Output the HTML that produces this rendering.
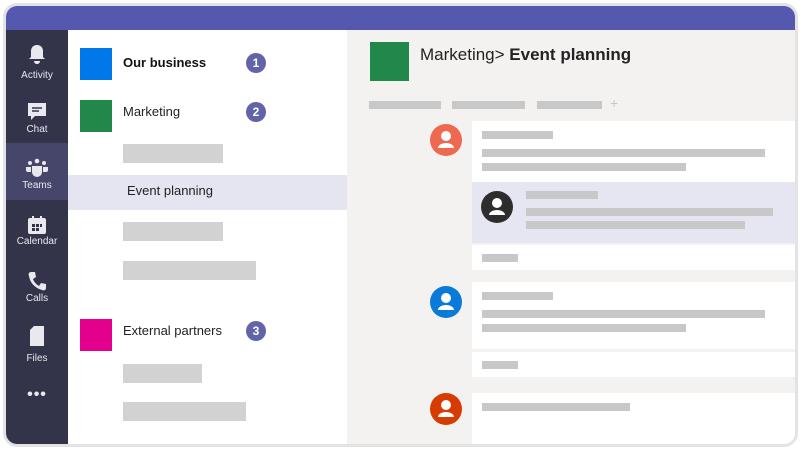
<!DOCTYPE html>
<html><head><meta charset="utf-8"><style>
*{margin:0;padding:0;box-sizing:border-box}
body{width:801px;height:449px;background:#fff;position:relative;overflow:hidden;font-family:"Liberation Sans",sans-serif}
.a{position:absolute}
.frame{left:3px;top:3px;width:795px;height:444px;border:3px solid #e3e3e3;border-radius:14px;overflow:hidden;background:#fff}
.bar{background:#c8c8c8}
.lbar{background:#d2d2d2}
.side{color:#e8e8ee;font-size:10px;text-align:center;width:62px;left:0}
.badge{width:20px;height:20px;border-radius:50%;background:#6264a7;color:#fff;font-size:12px;font-weight:bold;text-align:center;line-height:20px}
</style></head><body>
<div class="a frame">
 <div class="a" style="left:0;top:0;width:789px;height:24px;background:#5558af"></div>
 <div class="a" style="left:0;top:24px;width:62px;height:420px;background:#33344a"></div>
 <div class="a" style="left:0;top:137px;width:62px;height:57px;background:#45466a"></div>
 <svg class="a" style="left:20px;top:37px" width="22" height="22" viewBox="0 0 22 22"><path d="M11 2c-4 0-6 3-6 6v6l-2 2h16l-2-2V8c0-3-2-6-6-6z M8 18h6c0 2-1.5 3-3 3s-3-1-3-3z" fill="#e8e8ee"/></svg>
 <div class="a side" style="top:64px">Activity</div>
 <svg class="a" style="left:20px;top:95px" width="22" height="22" viewBox="0 0 22 22"><path d="M2 2h18v13H9l-4 4v-4H2z" fill="#e8e8ee"/><path d="M6 7h10M6 10h7" stroke="#33344a" stroke-width="1.5"/></svg>
 <div class="a side" style="top:118px">Chat</div>
 <svg class="a" style="left:19px;top:152px" width="24" height="20" viewBox="0 0 24 20"><circle cx="12" cy="3" r="2.3" fill="#e8e8ee"/><circle cx="5" cy="5" r="2" fill="#e8e8ee"/><circle cx="19" cy="5" r="2" fill="#e8e8ee"/><path d="M7 8h10v6a5 5 0 0 1-10 0z" fill="#e8e8ee"/><path d="M1 9h5v5H3a2 2 0 0 1-2-2zM18 9h5v3a2 2 0 0 1-2 2h-3z" fill="#e8e8ee"/></svg>
 <div class="a side" style="top:174px">Teams</div>
 <svg class="a" style="left:21px;top:209px" width="20" height="20" viewBox="0 0 20 20"><rect x="1" y="3" width="18" height="16" rx="2" fill="#e8e8ee"/><rect x="5" y="1" width="2" height="4" fill="#e8e8ee"/><rect x="13" y="1" width="2" height="4" fill="#e8e8ee"/><path d="M5 9h3v3H5zM9 9h3v3H9zM13 9h2v3h-2zM5 13h3v3H5zM9 13h3v3H9z" fill="#33344a"/></svg>
 <div class="a side" style="top:230px">Calendar</div>
 <svg class="a" style="left:22px;top:265px" width="18" height="20" viewBox="0 0 18 20"><path d="M3 1l4 0 1 5-3 2c1 3 3 5 6 7l2-3 5 1v4c0 2-2 3-4 2C7 17 2 12 1 5 0 3 1 1 3 1z" fill="#e8e8ee"/></svg>
 <div class="a side" style="top:287px">Calls</div>
 <svg class="a" style="left:22px;top:319px" width="18" height="22" viewBox="0 0 18 22"><path d="M6 1h10v20H2V5z" fill="#e8e8ee"/></svg>
 <div class="a side" style="top:347px">Files</div>
 <div class="a side" style="top:380px;font-size:16px;letter-spacing:1px;font-weight:bold">•••</div>
 <div class="a" style="left:74px;top:42px;width:32px;height:32px;background:#0078e8"></div>
 <div class="a" style="left:117px;top:49px;font-size:13px;font-weight:bold;color:#111">Our business</div>
 <div class="a badge" style="left:240px;top:47px">1</div>
 <div class="a" style="left:74px;top:94px;width:32px;height:32px;background:#22884a"></div>
 <div class="a" style="left:117px;top:98px;font-size:13px;color:#222">Marketing</div>
 <div class="a badge" style="left:240px;top:96px">2</div>
 <div class="a lbar" style="left:117px;top:138px;width:100px;height:19px"></div>
 <div class="a" style="left:62px;top:169px;width:279px;height:35px;background:#e5e5f1"></div>
 <div class="a" style="left:121px;top:177px;font-size:13px;color:#222">Event planning</div>
 <div class="a lbar" style="left:117px;top:216px;width:100px;height:19px"></div>
 <div class="a lbar" style="left:117px;top:255px;width:133px;height:19px"></div>
 <div class="a" style="left:74px;top:313px;width:32px;height:32px;background:#e3008c"></div>
 <div class="a" style="left:117px;top:317px;font-size:13px;color:#222">External partners</div>
 <div class="a badge" style="left:240px;top:315px">3</div>
 <div class="a lbar" style="left:117px;top:358px;width:79px;height:19px"></div>
 <div class="a lbar" style="left:117px;top:396px;width:123px;height:19px"></div>
 <div class="a" style="left:341px;top:24px;width:448px;height:420px;background:#f3f2f1"></div>
 <div class="a" style="left:364px;top:36px;width:39px;height:39px;background:#22884a"></div>
 <div class="a" style="left:414px;top:39px;font-size:17px;color:#222">Marketing&gt; <b>Event planning</b></div>
 <div class="a bar" style="left:363px;top:95px;width:72px;height:8px"></div>
 <div class="a bar" style="left:446px;top:95px;width:73px;height:8px"></div>
 <div class="a bar" style="left:531px;top:95px;width:65px;height:8px"></div>
 <div class="a" style="left:604px;top:89px;color:#c8c8c8;font-size:14px">+</div>
 <div class="a" style="left:466px;top:115px;width:323px;height:61px;background:#fff"></div>
 <div class="a" style="left:466px;top:176px;width:323px;height:61px;background:#e6e6f2"></div>
 <div class="a" style="left:466px;top:239px;width:323px;height:25px;background:#fff"></div>
 <div class="a bar" style="left:476px;top:125px;width:71px;height:8px"></div>
 <div class="a bar" style="left:476px;top:143px;width:283px;height:8px"></div>
 <div class="a bar" style="left:476px;top:157px;width:204px;height:8px"></div>
 <div class="a bar" style="left:520px;top:185px;width:72px;height:8px"></div>
 <div class="a bar" style="left:520px;top:202px;width:247px;height:8px"></div>
 <div class="a bar" style="left:520px;top:215px;width:219px;height:8px"></div>
 <div class="a bar" style="left:476px;top:248px;width:36px;height:8px"></div>
 <div class="a" style="left:466px;top:276px;width:323px;height:67px;background:#fff"></div>
 <div class="a" style="left:466px;top:346px;width:323px;height:25px;background:#fff"></div>
 <div class="a bar" style="left:476px;top:286px;width:71px;height:8px"></div>
 <div class="a bar" style="left:476px;top:304px;width:283px;height:8px"></div>
 <div class="a bar" style="left:476px;top:318px;width:204px;height:8px"></div>
 <div class="a bar" style="left:476px;top:355px;width:36px;height:8px"></div>
 <div class="a" style="left:466px;top:387px;width:323px;height:57px;background:#fff"></div>
 <div class="a bar" style="left:476px;top:397px;width:148px;height:8px"></div>
 <svg class="a" style="left:424px;top:118px" width="32" height="32" viewBox="0 0 32 32"><circle cx="16" cy="16" r="16" fill="#ef6950"/><circle cx="16" cy="12" r="5" fill="#fff"/><path d="M8 24a8 5 0 0 1 16 0z" fill="#fff"/></svg>
 <svg class="a" style="left:475px;top:185px" width="32" height="32" viewBox="0 0 32 32"><circle cx="16" cy="16" r="16" fill="#2d2d2d"/><circle cx="16" cy="12" r="5" fill="#fff"/><path d="M8 24a8 5 0 0 1 16 0z" fill="#fff"/></svg>
 <svg class="a" style="left:424px;top:280px" width="32" height="32" viewBox="0 0 32 32"><circle cx="16" cy="16" r="16" fill="#0a7ad8"/><circle cx="16" cy="12" r="5" fill="#fff"/><path d="M8 24a8 5 0 0 1 16 0z" fill="#fff"/></svg>
 <svg class="a" style="left:424px;top:387px" width="32" height="32" viewBox="0 0 32 32"><circle cx="16" cy="16" r="16" fill="#d83b01"/><circle cx="16" cy="12" r="5" fill="#fff"/><path d="M8 24a8 5 0 0 1 16 0z" fill="#fff"/></svg>
</div>
</body></html>
